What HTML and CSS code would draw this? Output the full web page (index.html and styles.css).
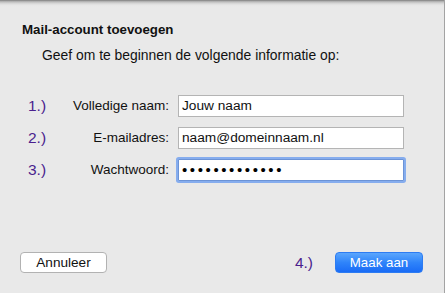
FILE: index.html
```html
<!DOCTYPE html>
<html lang="nl">
<head>
<meta charset="utf-8">
<title>Mail-account toevoegen</title>
<link rel="stylesheet" href="styles.css">
</head>
<body>
<div class="sheet">
  <h1 class="title">Mail-account toevoegen</h1>
  <p class="intro">Geef om te beginnen de volgende informatie op:</p>
  <div class="form">
    <div class="row">
      <span class="num">1.)</span>
      <span class="label">Volledige naam:</span>
      <div class="field">Jouw naam</div>
    </div>
    <div class="row">
      <span class="num">2.)</span>
      <span class="label">E-mailadres:</span>
      <div class="field">naam@domeinnaam.nl</div>
    </div>
    <div class="row">
      <span class="num">3.)</span>
      <span class="label">Wachtwoord:</span>
      <div class="field focused"><span class="dots">•••••••••••••</span></div>
    </div>
  </div>
  <div class="footer">
    <button class="btn">Annuleer</button>
    <div class="right">
      <span class="num step4">4.)</span>
      <button class="btn primary">Maak aan</button>
    </div>
  </div>
</div>
</body>
</html>
```
FILE: styles.css
```css
html, body {
  margin: 0;
  padding: 0;
}
body {
  width: 445px;
  height: 293px;
  overflow: hidden;
  font-family: "Liberation Sans", Arial, sans-serif;
  font-size: 13px;
  color: #111;
}
.sheet {
  box-sizing: border-box;
  height: 293px;
  width: 445px;
  border-right: 1px solid #a3a3a3;
  background: linear-gradient(#767676 0, #a8a8a8 1px, #d2d2d2 3px, #e6e6e6 5px, #e9e9e9 7px);
  display: flex;
  flex-direction: column;
  padding: 22px 0 20px 0;
}
.title {
  margin: 0 0 0 22px;
  font-size: 13.3px;
  line-height: 16px;
  font-weight: bold;
}
.intro {
  margin: 9px 0 0 42px;
  font-size: 13.9px;
  line-height: 16px;
}
.form {
  margin-top: 32px;
  display: flex;
  flex-direction: column;
  gap: 10px;
}
.row {
  display: flex;
  align-items: center;
  height: 22px;
  padding-left: 28px;
}
.num {
  color: #4a1f8e;
  font-size: 15.5px;
  line-height: 18px;
}
.row .num {
  width: 40px;
}
.label {
  width: 101px;
  text-align: right;
  margin-right: 9px;
  line-height: 16px;
  font-size: 13.5px;
}
.field {
  box-sizing: border-box;
  width: 226px;
  height: 22px;
  border: 1px solid #b4b4b4;
  background: #fff;
  padding: 0 3px;
  line-height: 20px;
  font-size: 13.7px;
  white-space: nowrap;
}
.field.focused {
  border-color: #6c93d6;
  box-shadow: 0 0 0 2px #86adee;
  border-radius: 1px;
}
.dots {
  letter-spacing: 2.6px;
  font-size: 15px;
  color: #000;
}
.footer {
  margin-top: auto;
  display: flex;
  justify-content: space-between;
  align-items: center;
  padding: 0 21px 0 20px;
}
.right {
  display: flex;
  align-items: center;
}
.step4 {
  margin-right: 22px;
}
.btn {
  box-sizing: border-box;
  width: 87px;
  height: 21px;
  font-family: "Liberation Sans", Arial, sans-serif;
  font-size: 13.6px;
  color: #111;
  background: #fff;
  border: 1px solid #b2b2b2;
  border-radius: 4px;
  padding: 0;
  line-height: 19px;
}
.btn.primary {
  width: 88px;
  font-size: 13.3px;
  color: #fff;
  border: 1px solid #2d7cf2;
  background: linear-gradient(#5aa6fd, #2f84fa 50%, #1a6cf6);
}
```
